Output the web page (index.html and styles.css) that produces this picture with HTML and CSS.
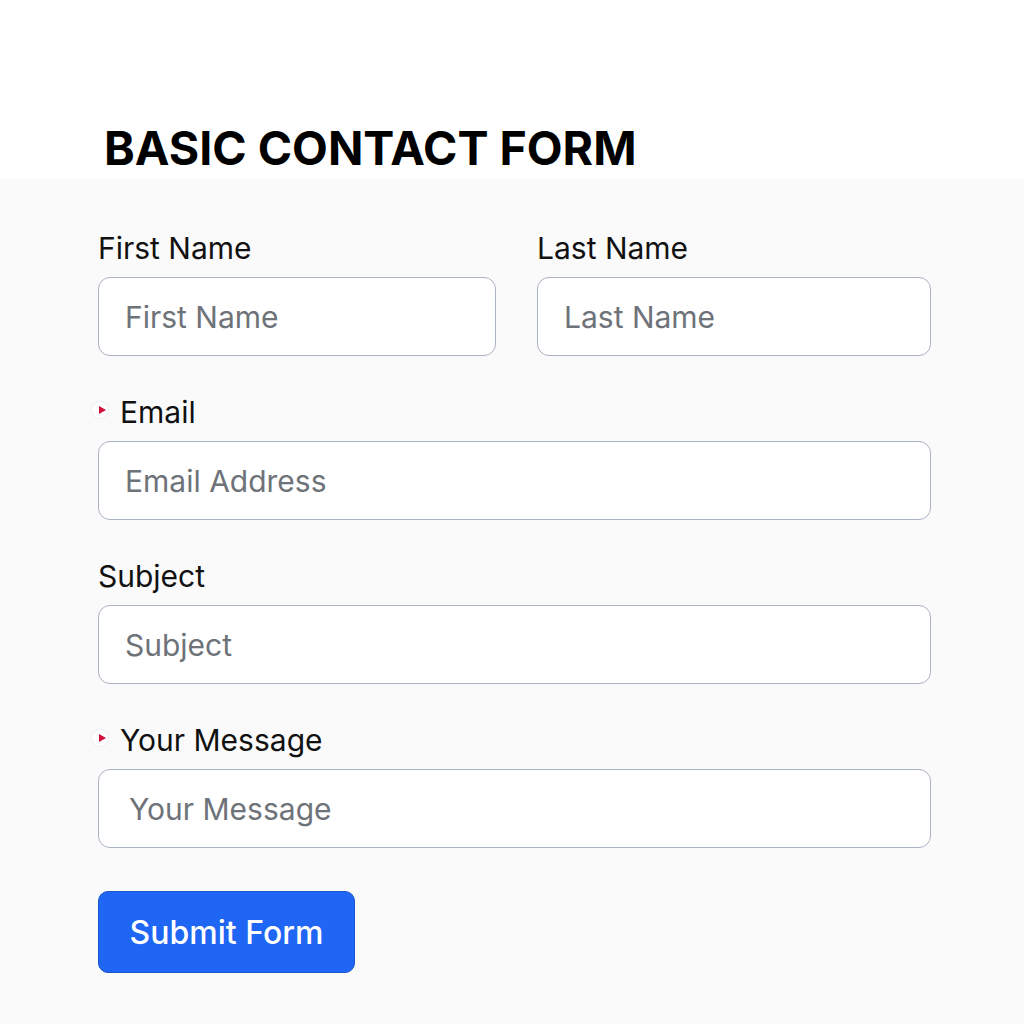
FILE: index.html
```html
<!DOCTYPE html>
<html lang="en">
<head>
<meta charset="utf-8">
<title>Basic Contact Form</title>
<link rel="stylesheet" href="styles.css">
</head>
<body>
<header class="page-header">
  <h1 class="title">BASIC CONTACT FORM</h1>
</header>
<main class="page-main">
  <form class="form">
    <div class="row">
      <div class="field">
        <label class="label">First Name</label>
        <input class="input" type="text" placeholder="First Name">
      </div>
      <div class="field">
        <label class="label">Last Name</label>
        <input class="input" type="text" placeholder="Last Name">
      </div>
    </div>
    <div class="field">
      <label class="label required"><span class="marker"></span>Email</label>
      <input class="input" type="email" placeholder="Email Address">
    </div>
    <div class="field">
      <label class="label">Subject</label>
      <input class="input" type="text" placeholder="Subject">
    </div>
    <div class="field">
      <label class="label required"><span class="marker"></span>Your Message</label>
      <input class="input input-msg" type="text" placeholder="Your Message">
    </div>
    <div class="actions">
      <button class="button" type="button">Submit Form</button>
    </div>
  </form>
</main>
</body>
</html>
```
FILE: styles.css
```css
* { box-sizing: border-box; }
html, body { margin: 0; padding: 0; }
body {
  font-family: Inter, "Noto Sans", "Liberation Sans", sans-serif;
  background: #fafafb;
  color: #111;
  min-height: 1024px;
}
.page-header {
  background: #ffffff;
  height: 178px;
  padding: 120px 0 0 104px;
}
.title {
  margin: 0;
  font-size: 46.5px;
  font-weight: 700;
  line-height: 56px;
  color: #000;
}
.page-main {
  padding: 53px 93px 0 98px;
}
.form {
  display: flex;
  flex-direction: column;
  gap: 39px;
}
.row {
  display: grid;
  grid-template-columns: 398px 1fr;
  column-gap: 41px;
}
.field {
  display: flex;
  flex-direction: column;
}
.label {
  font-size: 30px;
  line-height: 34px;
  margin-bottom: 12px;
  color: #111;
  display: flex;
  align-items: center;
}
.required { margin-left: -6px; }
.marker {
  width: 16px;
  height: 16px;
  border-radius: 50%;
  background: #fff;
  box-shadow: 0 0 2px rgba(0,0,0,0.12);
  margin-right: 12px;
  position: relative;
  top: -2px;
}
.marker::after {
  content: "";
  position: absolute;
  left: 7px;
  top: 4px;
  border-left: 7px solid #d0103a;
  border-top: 4px solid transparent;
  border-bottom: 4px solid transparent;
}
.input {
  height: 79px;
  border: 1.5px solid #aab3c2;
  border-radius: 12px;
  background: #fff;
  padding: 0 26px;
  font-family: inherit;
  font-size: 30px;
  color: #333;
  outline: none;
  width: 100%;
}
.input::placeholder { color: #6e7279; }
.input-msg { padding-left: 30px; }
.actions { padding-top: 4px; }
.button {
  width: 257px;
  height: 82px;
  background: #1f66f5;
  border: 1px solid #1a55d0;
  border-radius: 10px;
  color: #fff;
  font-family: inherit;
  font-size: 32px;
  font-weight: 500;
}
```
